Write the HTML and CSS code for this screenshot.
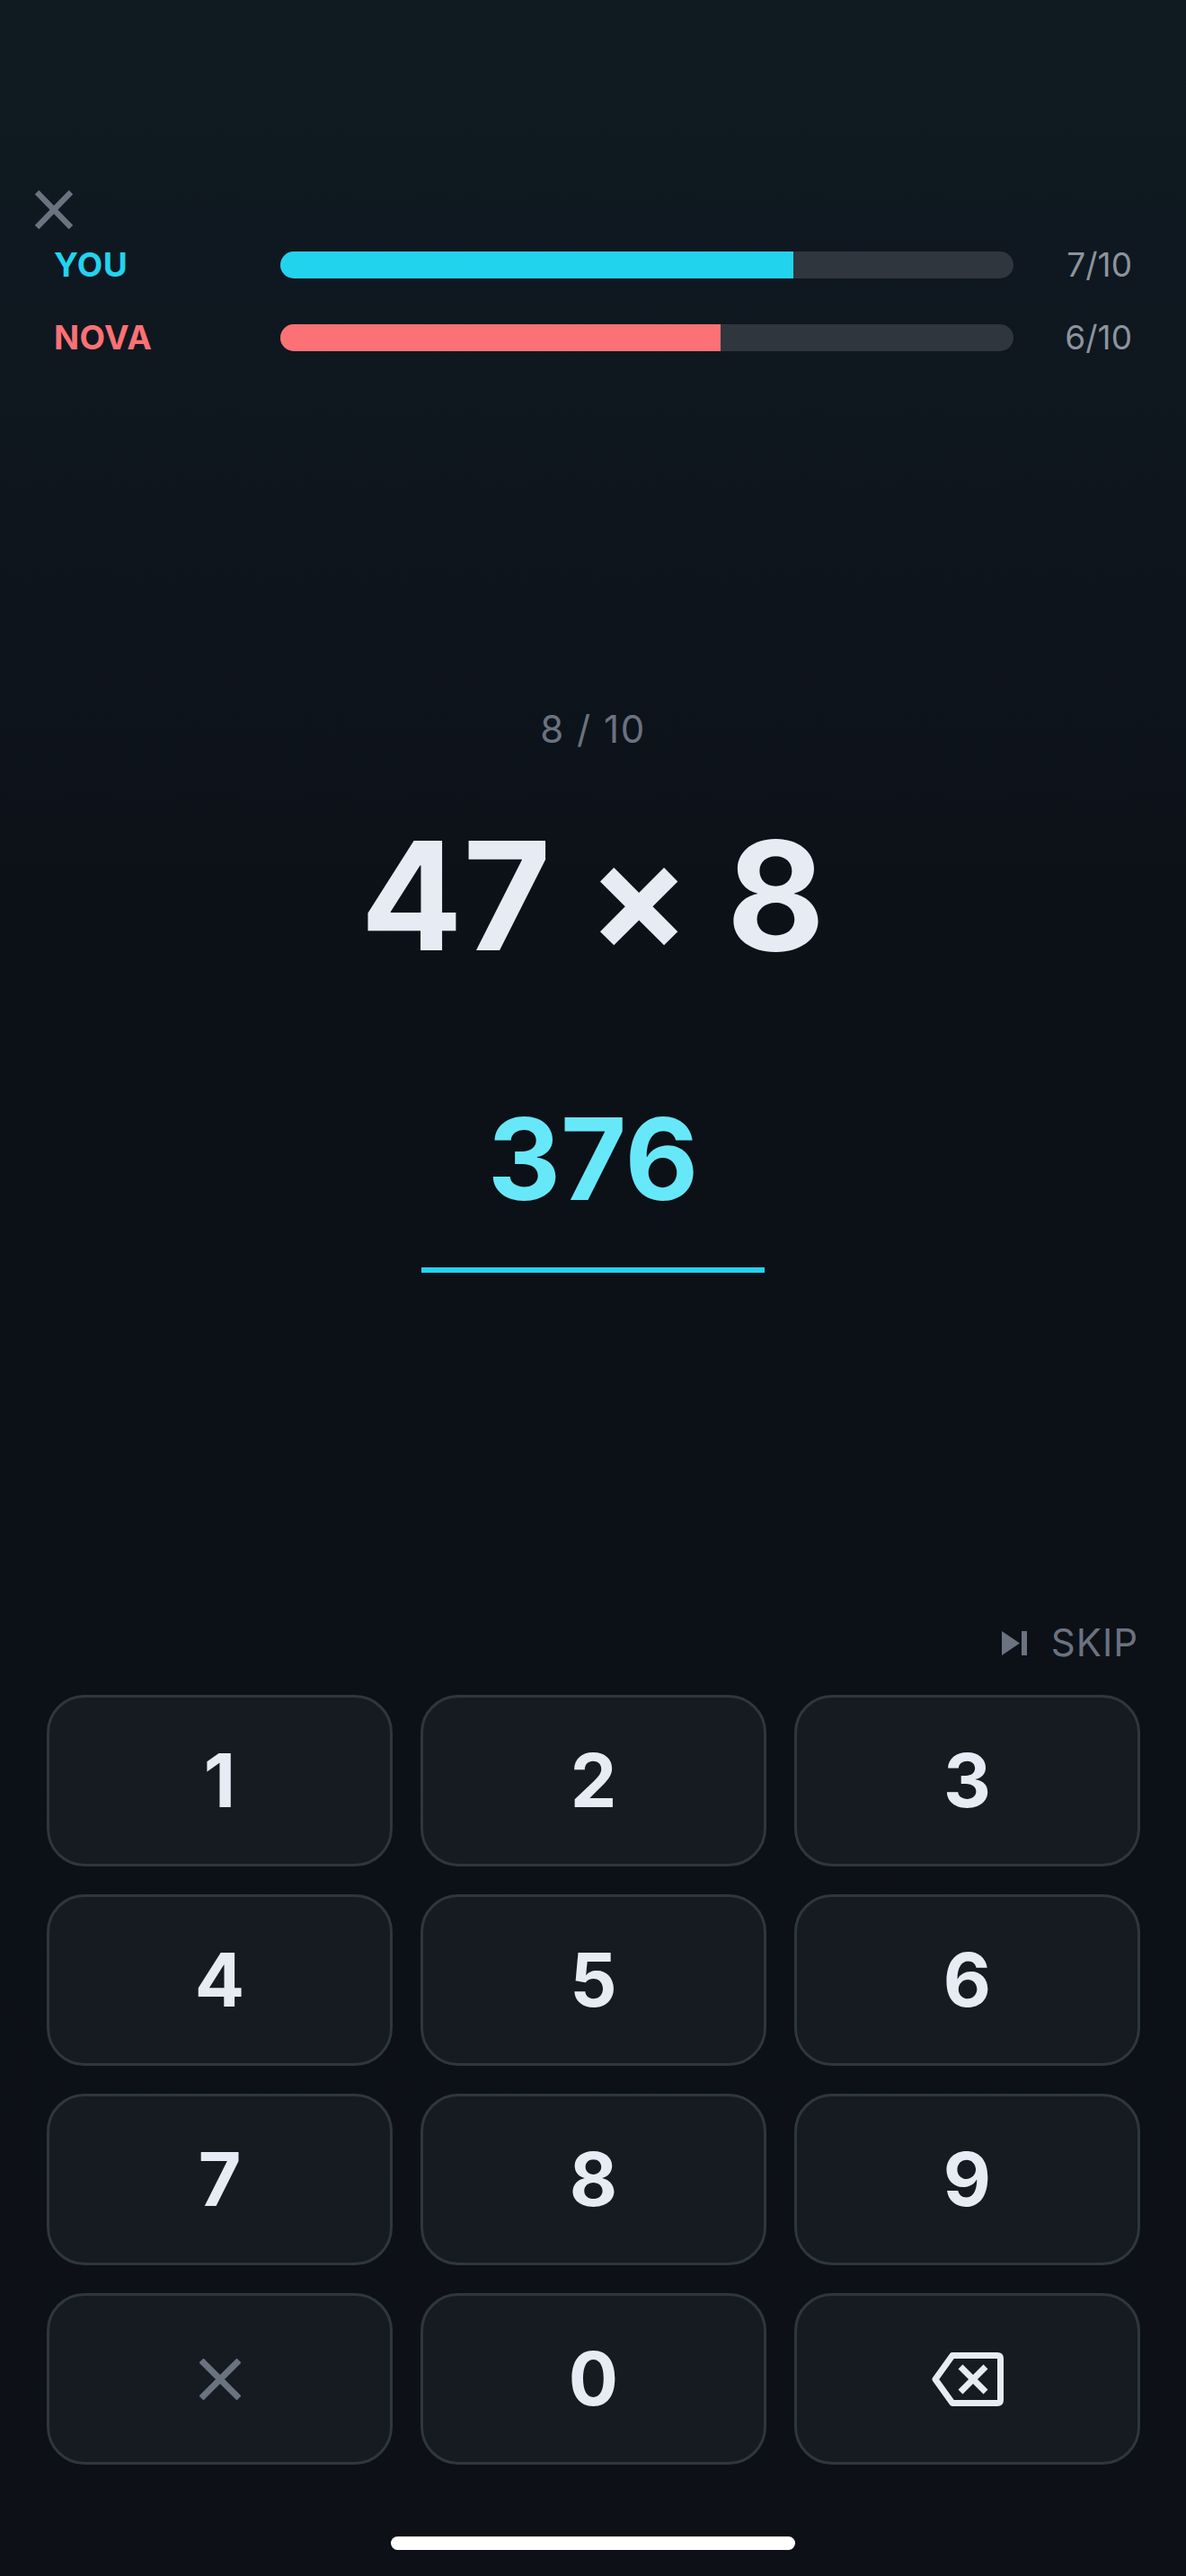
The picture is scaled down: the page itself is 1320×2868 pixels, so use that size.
FILE: index.html
```html
<!DOCTYPE html>
<html lang="en">
<head>
    <meta charset="UTF-8">
    <meta name="viewport" content="width=device-width, initial-scale=1.0">
    <title>Math Duel</title>
    <link rel="stylesheet" href="styles.css">
</head>
<body>
    <div class="screen">
        <button class="close-button" aria-label="Close">
            <svg width="42" height="43" viewBox="0 0 42 43"><path d="M2 2 L40 41 M40 2 L2 41" stroke="#6b7280" stroke-width="6.5" fill="none"/></svg>
        </button>

        <div class="scores">
            <div class="score-row">
                <div class="score-name you">YOU</div>
                <div class="bar"><div class="bar-fill you-fill" style="width: 70%"></div></div>
                <div class="score-count">7/10</div>
            </div>
            <div class="score-row">
                <div class="score-name nova">NOVA</div>
                <div class="bar"><div class="bar-fill nova-fill" style="width: 60%"></div></div>
                <div class="score-count">6/10</div>
            </div>
        </div>

        <div class="question">
            <div class="round">8 / 10</div>
            <div class="problem">47 × 8</div>
            <div class="answer">376</div>
            <div class="answer-line"></div>
        </div>

        <button class="skip">
            <svg width="28" height="27" viewBox="0 0 28 27"><path d="M0 0 L20 13.5 L0 27 Z M22 0 H28 V27 H22 Z" fill="#6b7280"/></svg>
            <span>SKIP</span>
        </button>

        <div class="keypad">
            <button class="key">1</button>
            <button class="key">2</button>
            <button class="key">3</button>
            <button class="key">4</button>
            <button class="key">5</button>
            <button class="key">6</button>
            <button class="key">7</button>
            <button class="key">8</button>
            <button class="key">9</button>
            <button class="key" aria-label="Clear">
                <svg width="46" height="46" viewBox="0 0 46 46"><path d="M2 2 L44 44 M44 2 L2 44" stroke="#6b7280" stroke-width="7" fill="none"/></svg>
            </button>
            <button class="key">0</button>
            <button class="key" aria-label="Delete">
                <svg width="80" height="60" viewBox="0 0 80 60"><path d="M23 3.5 H73 Q76.500 3.500 76.500 7 V53 Q76.500 56.500 73 56.500 H23 L4 30 Z" stroke="#e6ebf4" stroke-width="7" stroke-linejoin="round" fill="none"/><path d="M32 16 L60 44 M60 16 L32 44" stroke="#e6ebf4" stroke-width="7" fill="none"/></svg>
            </button>
        </div>

        <div class="home-indicator"></div>
    </div>
</body>
</html>
```

FILE: styles.css
```css
* {
    box-sizing: border-box;
    margin: 0;
    padding: 0;
    font-family: Inter, "Liberation Sans", sans-serif;
}

body {
    background-color: #0d1117;
}

button {
    background: none;
    border: none;
    cursor: pointer;
}

svg {
    display: block;
}

.screen {
    width: 1320px;
    height: 2868px;
    display: flex;
    flex-direction: column;
    overflow: hidden;
    background: linear-gradient(180deg, #0f1b21 0%, #0f1820 10%, #0c1017 40%, #0d1117 100%);
}

.close-button {
    align-self: flex-start;
    margin: 212px 0 0 39px;
}

/* score bars */
.scores {
    display: flex;
    flex-direction: column;
    gap: 51px;
    margin-top: 25px;
    padding: 0 60px;
}

.score-row {
    display: flex;
    align-items: center;
    height: 30px;
}

.score-name {
    width: 252px;
    font-size: 37px;
    font-weight: 700;
    line-height: 30px;
    letter-spacing: 0.4px;
}

.you {
    color: #22d3ee;
}

.nova {
    color: #fb7175;
}

.bar {
    width: 816px;
    height: 30px;
    border-radius: 15px;
    background-color: #30363d;
    overflow: hidden;
}

.bar-fill {
    height: 100%;
}

.you-fill {
    background-color: #22d3ee;
}

.nova-fill {
    background-color: #fb7175;
}

.score-count {
    flex: 1;
    text-align: right;
    font-size: 37px;
    line-height: 30px;
    color: #8b949e;
}

/* question */
.question {
    display: flex;
    flex-direction: column;
    align-items: center;
    margin-top: 396px;
}

.round {
    font-size: 42px;
    line-height: 50px;
    color: #6b7280;
    letter-spacing: 1.5px;
}

.problem {
    margin-top: 60px;
    font-size: 168px;
    font-weight: 700;
    line-height: 200px;
    letter-spacing: 0.5px;
    color: #e6ebf4;
}

.answer {
    margin-top: 113px;
    font-size: 126px;
    font-weight: 700;
    line-height: 160px;
    color: #67e8f9;
}

.answer-line {
    width: 382px;
    height: 6px;
    margin-top: 41px;
    background-color: #22d3ee;
}

/* skip */
.skip {
    align-self: flex-end;
    display: flex;
    align-items: center;
    gap: 27px;
    margin-top: 387px;
    margin-right: 53px;
    font-size: 42px;
    line-height: 50px;
    letter-spacing: 1px;
    color: #6b7280;
}

/* keypad */
.keypad {
    display: grid;
    grid-template-columns: repeat(3, 385px);
    grid-auto-rows: 191px;
    gap: 31px;
    margin-top: 33px;
    padding-left: 52px;
}

.key {
    display: flex;
    align-items: center;
    justify-content: center;
    background-color: #161b22;
    border: 3px solid #30363d;
    border-radius: 42px;
    font-size: 82px;
    font-weight: 700;
    color: #e6ebf4;
}

.home-indicator {
    align-self: center;
    width: 450px;
    height: 15px;
    margin-top: 80px;
    border-radius: 8px;
    background-color: #ffffff;
}
```
